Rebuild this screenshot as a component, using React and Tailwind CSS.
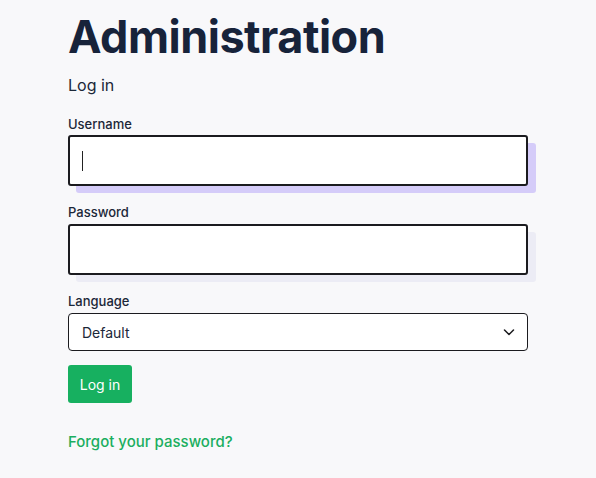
import React from "react";

export default function App() {
  return (
    <div className="min-h-[478px] w-full bg-[#f8f8fa] text-[#1b2738]" style={{ fontFamily: 'Inter, "Noto Sans", sans-serif' }}>
      <div className="ml-[68px] w-[460px] pt-[6px]">
        <h1 className="text-[45px] font-bold leading-[62px] tracking-[-0.5px] text-[#17233a]">Administration</h1>
        <p className="mt-[6px] text-[16px] leading-[22px]">Log in</p>
        <form className="mt-[18px] flex flex-col">
          <label className="text-[13px] font-medium leading-[20px]">Username</label>
          <div className="relative mt-[1px] h-[51px]">
            <div className="absolute left-[8px] top-[8px] h-[50px] w-[460px] rounded-[3px] bg-[#d5ccf9]" />
            <div className="relative flex h-[51px] w-[460px] items-center rounded-[3px] border-2 border-[#1b1b1f] bg-white px-[12px]">
              <span className="h-[20px] w-px bg-[#222]" />
            </div>
          </div>
          <label className="mt-[16px] text-[13px] font-medium leading-[20px]">Password</label>
          <div className="relative mt-[2px] h-[51px]">
            <div className="absolute left-[8px] top-[8px] h-[50px] w-[460px] rounded-[3px] bg-[#ececf5]" />
            <div className="relative h-[51px] w-[460px] rounded-[3px] border-2 border-[#1b1b1f] bg-white" />
          </div>
          <label className="mt-[16px] text-[13px] font-medium leading-[20px]">Language</label>
          <div className="mt-[2px] flex h-[38px] w-[460px] items-center justify-between rounded-[4px] border border-[#1b1b1f] bg-white pl-[13px] pr-[11px] text-[14px]">
            <span>Default</span>
            <svg width="14" height="14" viewBox="0 0 14 14" fill="none" stroke="#1b1b1f" strokeWidth="1.5" strokeLinecap="round" strokeLinejoin="round">
              <path d="M2.5 5l4.5 4.5L11.5 5" />
            </svg>
          </div>
          <button type="button" className="mt-[14px] h-[38px] w-[64px] rounded-[3px] bg-[#17b060] text-[14px] text-white">Log in</button>
          <a className="mt-[28px] text-[15px] font-medium leading-[22px] text-[#1bae5f]">Forgot your password?</a>
        </form>
      </div>
    </div>
  );
}
